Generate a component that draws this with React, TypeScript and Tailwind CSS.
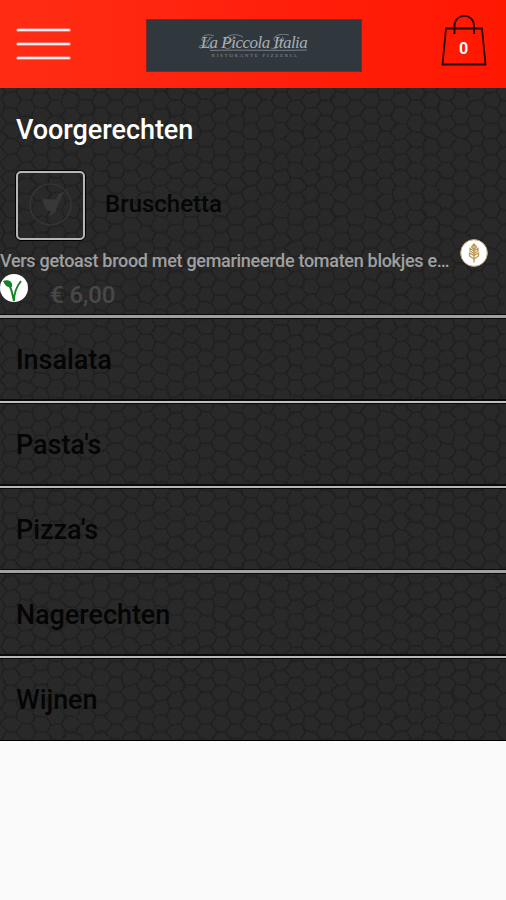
import React from "react";

const categories = [
  { name: "Insalata", line: "h-[2px] bg-[#c0bebe]" },
  { name: "Pasta's", line: "h-[2px] bg-[#b8b5b6]" },
  { name: "Pizza's", line: "h-[3px] bg-[#a3a0a1]" },
  { name: "Nagerechten", line: "h-[2px] bg-[#b8b8b8]" },
];

function Honeycomb() {
  return (
    <svg className="absolute inset-0 h-full w-full" aria-hidden="true">
      <defs>
        <pattern id="hex" width="30" height="15.6" patternUnits="userSpaceOnUse" patternTransform="translate(11 12)">
          <path
            d="M0 7.8H5L10 0H20L25 7.8H30M5 7.8L10 15.6H20L25 7.8"
            fill="none"
            stroke="#1f1f1f"
            strokeWidth="1.5"
          />
        </pattern>
        <filter id="warp" x="0" y="0" width="100%" height="100%" colorInterpolationFilters="sRGB">
          <feTurbulence type="fractalNoise" baseFrequency="0.09" numOctaves="2" seed="4" result="n" />
          <feDisplacementMap in="SourceGraphic" in2="n" scale="5" xChannelSelector="R" yChannelSelector="G" />
          <feGaussianBlur stdDeviation="0.6" />
        </filter>
      </defs>
      <rect width="100%" height="100%" fill="url(#hex)" filter="url(#warp)" />
    </svg>
  );
}

function Divider({ line }: { line: string }) {
  return (
    <div className="flex h-[5px] flex-col justify-center bg-[#0a0a0a]">
      <div className={line} />
    </div>
  );
}

function Header() {
  return (
    <header className="flex h-[88px] items-start bg-linear-to-r from-[#ff2d14] via-[#ff200c] to-[#ff1801] pl-4">
      <div className="mt-7 flex w-[55px] flex-col gap-[10px]">
        <div className="h-[4px] rounded-xs border border-[#ff6a62] bg-[#fff0f4]" />
        <div className="h-[4px] rounded-xs border border-[#ff6a62] bg-[#fff0f4]" />
        <div className="h-[4px] rounded-xs border border-[#ff6a62] bg-[#fff0f4]" />
      </div>
      <div className="mt-[19px] ml-[75px] flex h-[53px] w-[216px] flex-col items-center border border-[#772a27] bg-[#30383e] text-[#a9afb2]">
        <div className="relative mt-[14px] flex h-[18px] w-[112px] justify-center font-['Liberation_Serif',serif] text-[17px] leading-[18px] tracking-[-0.5px] whitespace-nowrap italic">
          <svg viewBox="0 0 112 18" className="absolute inset-0 h-full w-full" fill="none" stroke="#7d868b" strokeWidth="0.9">
            <path d="M16 2C10-1 3 2 4 6C5 9 11 7 14 3M12 3C10 9 7 14 2 14C-1 12 4 10 9 13C13 15 16 14 17 12" />
            <path d="M45 3C37-2 26 2 28 7C30 10 35 6 36 2M27 14C31 16 34 13 36 8" />
            <path d="M91 1C82-1 75 2 76 6C78 9 83 6 85 3M73 14C78 17 83 11 86 4" />
            <path d="M12 16.5C40 15.5 75 17 109 16" />
          </svg>
          <span className="relative">La Piccola Italia</span>
        </div>
        <div className="mt-[1px] pl-[2px] font-['Liberation_Serif',serif] text-[5px] leading-[5px] tracking-[1.7px] whitespace-nowrap text-[#8b9296]">
          RISTORANTE PIZZERIA
        </div>
      </div>
      <div className="relative mt-[14px] ml-[78.5px] h-[53px] w-[46px]">
        <svg viewBox="0 0 46 53" className="h-full w-full" fill="none" stroke="#300000" strokeWidth="1.8">
          <path d="M5 14.5H41L44.5 50.5H1.5Z" />
          <path d="M13.5 20V12C13.5-1.5 33-1.5 33 12V20" />
        </svg>
        <span className="absolute inset-x-0 top-[25px] text-center text-[16px] leading-5 font-bold text-white">0</span>
      </div>
    </header>
  );
}

export default function App() {
  return (
    <div className="h-[900px] w-[506px] overflow-hidden bg-[#fafafa] font-['Roboto',sans-serif]">
      <Header />
      <main className="relative h-[653px] overflow-hidden bg-[#292929]">
        <Honeycomb />
        <div className="relative">
          <section className="h-[226px] pt-[25px]">
            <h1 className="pl-4 text-[27px] leading-[34px] font-medium tracking-[-0.05px] text-white">Voorgerechten</h1>
            <div className="mt-[23px] flex h-[70px] items-center pl-[15px]">
              <div className="flex size-[71px] items-center justify-center rounded-[6px] border border-black">
                <div className="flex size-[69px] items-center justify-center rounded-[5px] border-2 border-[#b9b4b5]">
                  <svg viewBox="0 0 46 46" className="size-[46px]" fill="none" stroke="#353535">
                    <circle cx="22.5" cy="22.5" r="20.5" strokeWidth="1.6" />
                    <path d="M14 17L28 18L31 12L36 10L30 21L27 30L22 34L23 29L18 27Z" fill="#383838" />
                  </svg>
                </div>
              </div>
              <span className="mt-[-3px] ml-[19px] text-[24px] leading-8 font-medium text-[#060606]">Bruschetta</span>
            </div>
            <div className="flex h-[34px] items-start">
              <p className="mt-[9px] w-[451px] text-[18px] leading-6 font-medium tracking-[-0.3px] whitespace-nowrap text-[#a0a0a0]">
                Vers getoast brood met gemarineerde tomaten blokjes e…
              </p>
              <svg viewBox="0 0 28 28" className="mt-[-1px] ml-[9px] size-7" fill="none">
                <circle cx="14" cy="14" r="13.4" fill="#fff" stroke="#b49a75" />
                <g stroke="#bb9651" strokeWidth="1.3">
                  <path d="M14 4.5V23.5M14 5L11.5 8L14 10.5L16.5 8Z" />
                  <path d="M10 9.5L14 12L18 9.5V12L14 14.5L10 12ZM9.5 14L14 16.5L18.5 14V17L14 20L9.5 17Z" />
                </g>
              </svg>
            </div>
            <div className="flex h-[34px] items-start">
              <svg viewBox="0 0 29 29" className="size-[29px]" fill="none">
                <circle cx="14" cy="14" r="14" fill="#fff" />
                <path d="M3 7C9 5 13 8 12 13C7 14 5 11 3 7Z" fill="#158127" />
                <path d="M8 10C12 14 12 20 14 27C14 18 17 12 21 7" stroke="#168529" strokeWidth="2" />
              </svg>
              <span className="mt-[5px] ml-[21px] text-[24px] leading-8 font-medium tracking-[-0.1px] text-[#484848]">€ 6,00</span>
            </div>
          </section>
          <Divider line="h-[3px] bg-[#a09e9e]" />
          {categories.map((category) => (
            <React.Fragment key={category.name}>
              <div className="flex h-20 items-center pt-[2px] pl-4 text-[27px] leading-8 font-medium tracking-[-0.05px] text-[#050505]">
                {category.name}
              </div>
              <Divider line={category.line} />
            </React.Fragment>
          ))}
          <div className="flex h-[82px] items-center border-b border-black pl-4 text-[27px] leading-8 font-medium tracking-[-0.1px] text-[#050505]">
            Wijnen
          </div>
        </div>
      </main>
    </div>
  );
}
